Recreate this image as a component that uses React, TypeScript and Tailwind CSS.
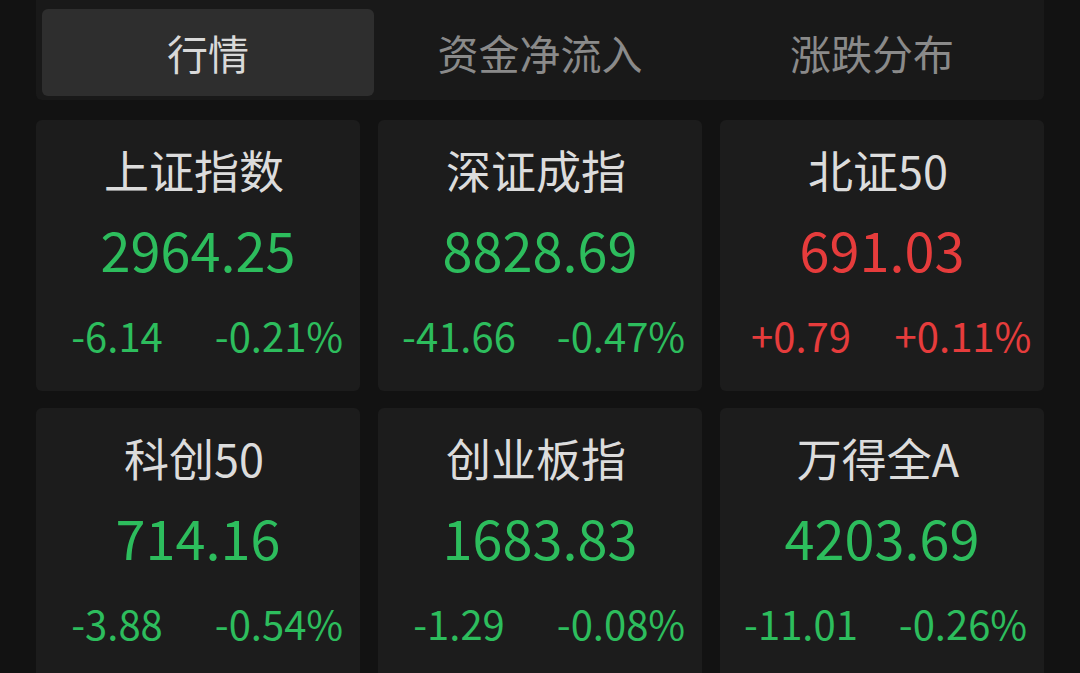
import React from "react";

type Item = { name: string; value: string; chg: string; pct: string; up: boolean };

const items: Item[] = [
  { name: "上证指数", value: "2964.25", chg: "-6.14", pct: "-0.21%", up: false },
  { name: "深证成指", value: "8828.69", chg: "-41.66", pct: "-0.47%", up: false },
  { name: "北证50", value: "691.03", chg: "+0.79", pct: "+0.11%", up: true },
  { name: "科创50", value: "714.16", chg: "-3.88", pct: "-0.54%", up: false },
  { name: "创业板指", value: "1683.83", chg: "-1.29", pct: "-0.08%", up: false },
  { name: "万得全A", value: "4203.69", chg: "-11.01", pct: "-0.26%", up: false },
];

const tabs = ["行情", "资金净流入", "涨跌分布"];

function Card({ it }: { it: Item }) {
  const color = it.up ? "text-[#e63c3c]" : "text-[#2dbd5d]";
  return (
    <div className="flex h-[271px] flex-col items-center rounded-[6px] bg-[#1c1c1c] pt-[26px]">
      <div className="pr-[8px] text-[45px] leading-[48px] text-[#dcdcdc]">{it.name}</div>
      <div className={`mt-[25px] text-[54px] leading-[60px] ${color}`}>{it.value}</div>
      <div className={`mt-[35px] grid w-full grid-cols-2 text-[40px] leading-[42px] ${color}`}>
        <div className="text-center">{it.chg}</div>
        <div className="text-center">{it.pct}</div>
      </div>
    </div>
  );
}

export default function App() {
  return (
    <div
      className="h-[673px] w-[1080px] overflow-hidden bg-[#121212] px-[36px]"
      style={{ fontFamily: '"Noto Sans CJK SC", "Noto Sans", sans-serif' }}
    >
      <div className="grid grid-cols-3 rounded-b-[6px] bg-[#191919] px-[6px] pb-[4px] pt-[9px]">
        {tabs.map((t, i) => (
          <div
            key={t}
            className={`flex h-[87px] items-center justify-center rounded-[6px] text-[41px] ${
              i === 0 ? "bg-[#2e2e2e] text-[#d9d9d9]" : "text-[#8a8a8a]"
            }`}
          >
            {t}
          </div>
        ))}
      </div>
      <div className="mt-[20px] grid grid-cols-3 gap-x-[18px] gap-y-[17px]">
        {items.map((it) => (
          <Card key={it.name} it={it} />
        ))}
      </div>
    </div>
  );
}
